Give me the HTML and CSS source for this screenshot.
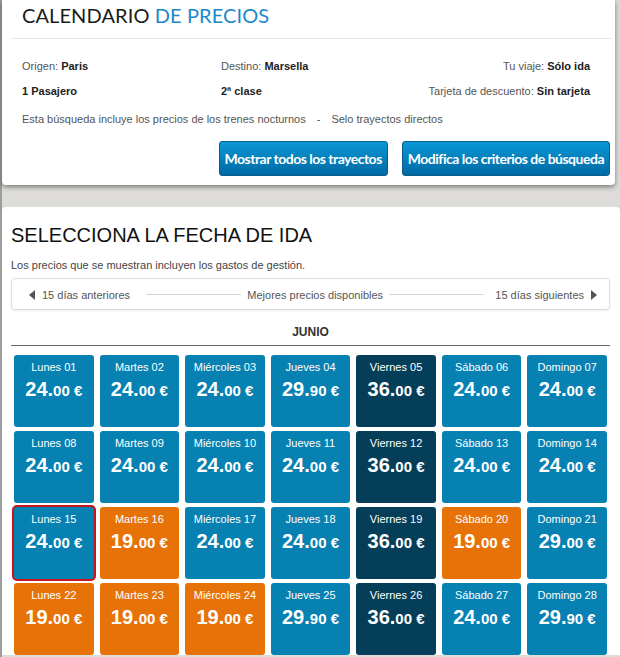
FILE: index.html
```html
<!DOCTYPE html>
<html lang="es">
<head>
  <meta charset="UTF-8" />
  <title>Calendario de precios</title>
  <link rel="stylesheet" href="styles.css">
</head>
<body>
  <div class="page">
    <div class="card summary">
      <h1 class="summary-title">CALENDARIO <span class="accent">DE PRECIOS</span></h1>
      <div class="trip-info">
        <div class="info-row">
          <span>Origen: <b>Paris</b></span>
          <span>Destino: <b>Marsella</b></span>
          <span>Tu viaje: <b>Sólo ida</b></span>
        </div>
        <div class="info-row">
          <span><b>1 Pasajero</b></span>
          <span><b>2ª clase</b></span>
          <span>Tarjeta de descuento: <b>Sin tarjeta</b></span>
        </div>
        <div class="info-note">
          Esta búsqueda incluye los precios de los trenes nocturnos<span class="note-sep">-</span>Selo trayectos directos
        </div>
      </div>
      <div class="actions">
        <button class="btn">Mostrar todos los trayectos</button>
        <button class="btn">Modifica los criterios de búsqueda</button>
      </div>
    </div>

    <div class="card calendar">
      <h2 class="calendar-title">SELECCIONA LA FECHA DE IDA</h2>
      <p class="fees">Los precios que se muestran incluyen los gastos de gestión.</p>
      <div class="range-nav">
        <a class="nav-link prev"><span class="tri-left"></span>15 días anteriores</a>
        <span class="nav-line"></span>
        <span class="nav-center">Mejores precios disponibles</span>
        <span class="nav-line"></span>
        <a class="nav-link next">15 días siguientes<span class="tri-right"></span></a>
      </div>
      <div class="month">JUNIO</div>
      <div id="days" class="days"></div>
    </div>
  </div>

  <script>
    const nombres = ['Lunes', 'Martes', 'Miércoles', 'Jueves', 'Viernes', 'Sábado', 'Domingo'];
    const precios = [
      '24.00', '24.00', '24.00', '29.90', '36.00', '24.00', '24.00',
      '24.00', '24.00', '24.00', '24.00', '36.00', '24.00', '24.00',
      '24.00', '19.00', '24.00', '24.00', '36.00', '19.00', '29.00',
      '19.00', '19.00', '19.00', '29.90', '36.00', '24.00', '29.90'
    ];
    const seleccionado = 15;

    function claseDia(precio) {
      if (precio === '19.00') return 'day cheap';
      if (precio === '36.00') return 'day dear';
      return 'day';
    }

    let html = '';
    precios.forEach((precio, i) => {
      const dia = String(i + 1).padStart(2, '0');
      const [entero, decimal] = precio.split('.');
      let clase = claseDia(precio);
      if (i + 1 === seleccionado) clase += ' selected';
      html += `<div class="${clase}">
        <div class="day-name">${nombres[i % 7]} ${dia}</div>
        <div class="day-price">${entero}.<small>${decimal} €</small></div>
      </div>`;
    });
    document.getElementById('days').innerHTML = html;
  </script>
</body>
</html>
```

FILE: styles.css
```css
body {
  margin: 0;
  background-color: #dddcd8;
  font-family: Arial, "Liberation Sans", sans-serif;
  font-size: 11px;
  color: #555;
}
.page {
  border-left: 2px solid #9d9d9d;
  min-height: 100vh;
}
.card {
  background: white;
}

/* resumen del viaje */
.summary {
  width: 613px;
  padding-bottom: 9px;
  border-radius: 0 0 4px 4px;
  box-shadow: 0 2px 5px rgba(0, 0, 0, 0.45);
}
.summary-title {
  margin: 0 3px 0 9px;
  padding: 3px 0 11px 11px;
  font: 400 20px/24px Lato, sans-serif;
  letter-spacing: 0.1px;
  color: #1b1b1b;
  border-bottom: 1px solid #e8e8e8;
}
.accent {
  color: #1b87cf;
}
.trip-info {
  padding: 15px 25px 0 20px;
}
.info-row {
  display: grid;
  grid-template-columns: 199px 1fr auto;
  line-height: 24px;
}
.info-row + .info-row {
  margin-top: 1px;
}
.info-row b {
  color: #222;
}
.info-note {
  margin-top: 4px;
  line-height: 24px;
}
.note-sep {
  margin: 0 11px;
}
.actions {
  display: flex;
  justify-content: flex-end;
  gap: 14px;
  margin-top: 10px;
  padding-right: 5px;
}
.btn {
  height: 35px;
  padding: 0 5px;
  border: 1px solid #0b5b8b;
  border-radius: 3px;
  background: linear-gradient(#0a97d5, #006aa4);
  color: white;
  font: 700 14px Lato, sans-serif;
  letter-spacing: -0.5px;
  cursor: pointer;
}

/* calendario */
.calendar {
  margin-top: 22px;
  padding: 16px 10px 0 9px;
  border-radius: 4px 4px 0 0;
}
.calendar-title {
  margin: 0;
  font: 400 20px/24px Arial, "Liberation Sans", sans-serif;
  color: #111;
}
.fees {
  margin: 10px 0 0;
  line-height: 16px;
  color: #444;
}
.range-nav {
  display: flex;
  align-items: center;
  height: 29px;
  margin-top: 5px;
  padding: 1px 12px 0 17px;
  border: 1px solid #dcdcdc;
  border-radius: 4px;
  box-shadow: 0 1px 2px rgba(0, 0, 0, 0.08);
}
.nav-link {
  display: flex;
  align-items: center;
  gap: 7px;
  color: #555;
  cursor: pointer;
}
.prev {
  margin-right: 10px;
}
.next {
  margin-left: 5px;
}
.tri-left, .tri-right {
  width: 0;
  height: 0;
  border-top: 5px solid transparent;
  border-bottom: 5px solid transparent;
}
.tri-left {
  border-right: 6px solid #555;
}
.tri-right {
  border-left: 6px solid #555;
}
.nav-line {
  flex: 1;
  height: 1px;
  margin: 0 6px;
  background: #d5d5d5;
}
.month {
  margin-top: 14px;
  padding-bottom: 5px;
  border-bottom: 1px solid #666;
  text-align: center;
  font-size: 12px;
  font-weight: bold;
  line-height: 16px;
  color: #333;
}
.days {
  display: grid;
  grid-template-columns: repeat(7, 1fr);
  gap: 4px 6px;
  margin: 9px 3px 0;
}
.day {
  height: 72px;
  padding-top: 5px;
  box-sizing: border-box;
  border-radius: 3px;
  background: #0781b2;
  color: white;
  text-align: center;
}
.day.cheap {
  background: #e77308;
}
.day.dear {
  background: #053e59;
}
.day.selected {
  box-shadow: 0 0 0 2px #c8141c;
}
.day-name {
  line-height: 14px;
}
.day-price {
  margin-top: 3px;
  font-size: 20px;
  font-weight: bold;
  line-height: 24px;
}
.day-price small {
  font-size: 15px;
}
```
